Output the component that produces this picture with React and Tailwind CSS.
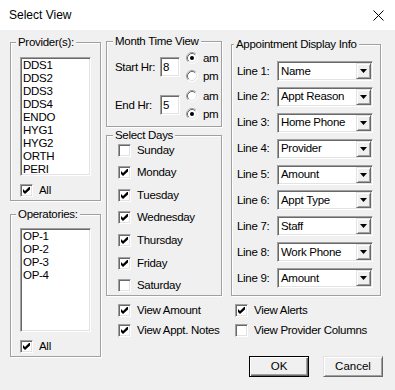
import React from 'react';

/* ─── shared bevels ─── */
const sunken =
  'border border-t-[#a0a0a0] border-l-[#a0a0a0] border-r-white border-b-white shadow-[inset_1px_1px_0_#696969,inset_-1px_-1px_0_#e3e3e3]';
const raised =
  'border border-t-[#e3e3e3] border-l-[#e3e3e3] border-r-[#696969] border-b-[#696969] shadow-[inset_1px_1px_0_#fff,inset_-1px_-1px_0_#a0a0a0]';
const etched = 'border border-[#a0a0a0] shadow-[inset_1px_1px_0_#fff,1px_1px_0_#fff]';

function Check({ checked, label }) {
  return (
    <div className="flex items-center h-4 gap-[6px]">
      <span className={`w-[13px] h-[13px] bg-white flex items-center justify-center shrink-0 ${sunken}`}>
        {checked && (
          <svg width="7" height="7" viewBox="0 0 7 7">
            <path d="M0 2 L2 4 L6 0 L7 0 L7 2.6 L2 7 L0 5 Z" fill="#000" />
          </svg>
        )}
      </span>
      <span>{label}</span>
    </div>
  );
}

function Radio({ on, label }) {
  return (
    <div className="flex items-center h-[18px] gap-[5px]">
      <svg width="12" height="12" viewBox="0 0 12 12" className="shrink-0">
        <circle cx="6" cy="6" r="5" fill="#fff" />
        <path d="M2.11 9.89 A5.5 5.5 0 0 1 9.89 2.11" fill="none" stroke="#a0a0a0" />
        <path d="M9.89 2.11 A5.5 5.5 0 0 1 2.11 9.89" fill="none" stroke="#fff" />
        <path d="M2.82 9.18 A4.5 4.5 0 0 1 9.18 2.82" fill="none" stroke="#696969" />
        <path d="M9.18 2.82 A4.5 4.5 0 0 1 2.82 9.18" fill="none" stroke="#e3e3e3" />
        {on && <circle cx="6" cy="6" r="2" fill="#000" />}
      </svg>
      <span>{label}</span>
    </div>
  );
}

function Combo({ value }) {
  return (
    <div className={`w-[96px] h-5 bg-white flex items-center p-[1px] ${sunken}`}>
      <span className="flex-1 pl-[2px] truncate">{value}</span>
      <span className={`w-[15px] h-4 bg-[#f0f0f0] flex items-center justify-center ${raised}`}>
        <svg width="7" height="4" viewBox="0 0 7 4">
          <path d="M0 0 H7 L3.5 4 Z" fill="#000" />
        </svg>
      </span>
    </div>
  );
}

function Legend({ children, className = '' }) {
  return (
    <span className={`self-start -mt-[7px] h-[13px] leading-[13px] px-[2px] bg-[#f0f0f0] ${className}`}>
      {children}
    </span>
  );
}

function ListBox({ items, height }) {
  return (
    <div className={`w-[71px] bg-white pl-[2px] pt-[1px] leading-[13px] ${height} ${sunken}`}>
      {items.map(i => <div key={i}>{i}</div>)}
    </div>
  );
}

const providers = ['DDS1', 'DDS2', 'DDS3', 'DDS4', 'ENDO', 'HYG1', 'HYG2', 'ORTH', 'PERI'];
const operatories = ['OP-1', 'OP-2', 'OP-3', 'OP-4'];
const days = [
  ['Sunday', false], ['Monday', true], ['Tuesday', true], ['Wednesday', true],
  ['Thursday', true], ['Friday', true], ['Saturday', false],
];
const lines = ['Name', 'Appt Reason', 'Home Phone', 'Provider', 'Amount', 'Appt Type', 'Staff', 'Work Phone', 'Amount'];

export default function App() {
  return (
    <div className="w-[395px] h-[390px] bg-[#f0f0f0] flex flex-col font-['Liberation_Sans',Arial,sans-serif] text-black overflow-hidden">

      {/* Title bar */}
      <div className="h-[30px] bg-white flex items-center justify-between pl-[9px] pr-[11px] text-[12px] shrink-0">
        <span>Select View</span>
        <svg width="11" height="11" viewBox="0 0 11 11">
          <path d="M0.5 0.5 L10.5 10.5 M10.5 0.5 L0.5 10.5" stroke="#000" strokeWidth="1" />
        </svg>
      </div>

      {/* Body */}
      <div className="flex pl-[10px] pt-[11px] gap-[5px] text-[11.5px] tracking-[-0.3px] leading-[13px]">

        {/* Left column */}
        <div className="flex flex-col w-[91px] shrink-0">
          <div className={`mt-[1px] flex flex-col pl-[9px] pb-[3px] ${etched}`}>
            <Legend className="-ml-[4px]">Provider(s):</Legend>
            <div className="mt-2">
              <ListBox items={providers} height="h-[119px]" />
            </div>
            <div className="mt-2 h-[13px] flex items-center">
              <Check checked label="All" />
            </div>
          </div>

          <div className={`mt-[13px] flex flex-col pl-[9px] pb-[3px] ${etched}`}>
            <Legend className="-ml-[4px]">Operatories:</Legend>
            <div className="mt-[7px]">
              <ListBox items={operatories} height="h-[104px]" />
            </div>
            <div className="mt-2 h-[13px] flex items-center">
              <Check checked label="All" />
            </div>
          </div>
        </div>

        {/* Right area */}
        <div className="flex flex-col w-[276px]">
          <div className="flex gap-[9px] items-stretch">

            {/* Middle column */}
            <div className="flex flex-col w-[116px] shrink-0">
              <div className={`flex flex-col pl-[8px] pb-[3px] ${etched}`}>
                <Legend className="-ml-[2px]">Month Time View</Legend>
                <div className="mt-[1px] flex items-center">
                  <span className="w-[45px]">Start Hr:</span>
                  <span className={`w-5 h-5 bg-white pl-[2px] flex items-center ${sunken}`}>8</span>
                  <div className="ml-[6px] flex flex-col">
                    <Radio on label="am" />
                    <Radio label="pm" />
                  </div>
                </div>
                <div className="mt-[2px] flex items-center">
                  <span className="w-[45px]">End Hr:</span>
                  <span className={`w-5 h-5 bg-white pl-[2px] flex items-center ${sunken}`}>5</span>
                  <div className="ml-[6px] flex flex-col">
                    <Radio label="am" />
                    <Radio on label="pm" />
                  </div>
                </div>
              </div>

              <div className={`mt-2 flex flex-col pl-[11px] pb-[1px] ${etched}`}>
                <Legend className="-ml-[5px]">Select Days</Legend>
                <div className="flex flex-col gap-[6.67px]">
                  {days.map(([d, c]) => <Check key={d} checked={c} label={d} />)}
                </div>
              </div>
            </div>

            {/* Appointment display info */}
            <div className={`mt-[3px] w-[150px] flex flex-col pl-[5px] ${etched}`}>
              <Legend className="-ml-[3px]">Appointment Display Info</Legend>
              <div className="mt-[10px] flex flex-col gap-[5.9px]">
                {lines.map((v, i) => (
                  <div key={i} className="flex items-center h-5">
                    <span className="w-[40px]">Line {i + 1}:</span>
                    <Combo value={v} />
                  </div>
                ))}
              </div>
            </div>
          </div>

          {/* Options */}
          <div className="mt-[7px] grid grid-cols-[125px_1fr] gap-y-1">
            <div className="pl-[12px]"><Check checked label="View Amount" /></div>
            <div className="pl-[4px]"><Check checked label="View Alerts" /></div>
            <div className="pl-[12px]"><Check checked label="View Appt. Notes" /></div>
            <div className="pl-[4px]"><Check label="View Provider Columns" /></div>
          </div>

          {/* Buttons */}
          <div className="mt-[17px] flex justify-end gap-[14px] -mr-[1px] tracking-normal">
            <button className="w-[60px] h-[21px] border border-black bg-[#f0f0f0] shadow-[inset_1px_1px_0_#fff,inset_-1px_-1px_0_#696969,inset_-2px_-2px_0_#a0a0a0]">
              OK
            </button>
            <button className={`w-[60px] h-[21px] bg-[#f0f0f0] ${raised}`}>
              Cancel
            </button>
          </div>
        </div>
      </div>
    </div>
  );
}
